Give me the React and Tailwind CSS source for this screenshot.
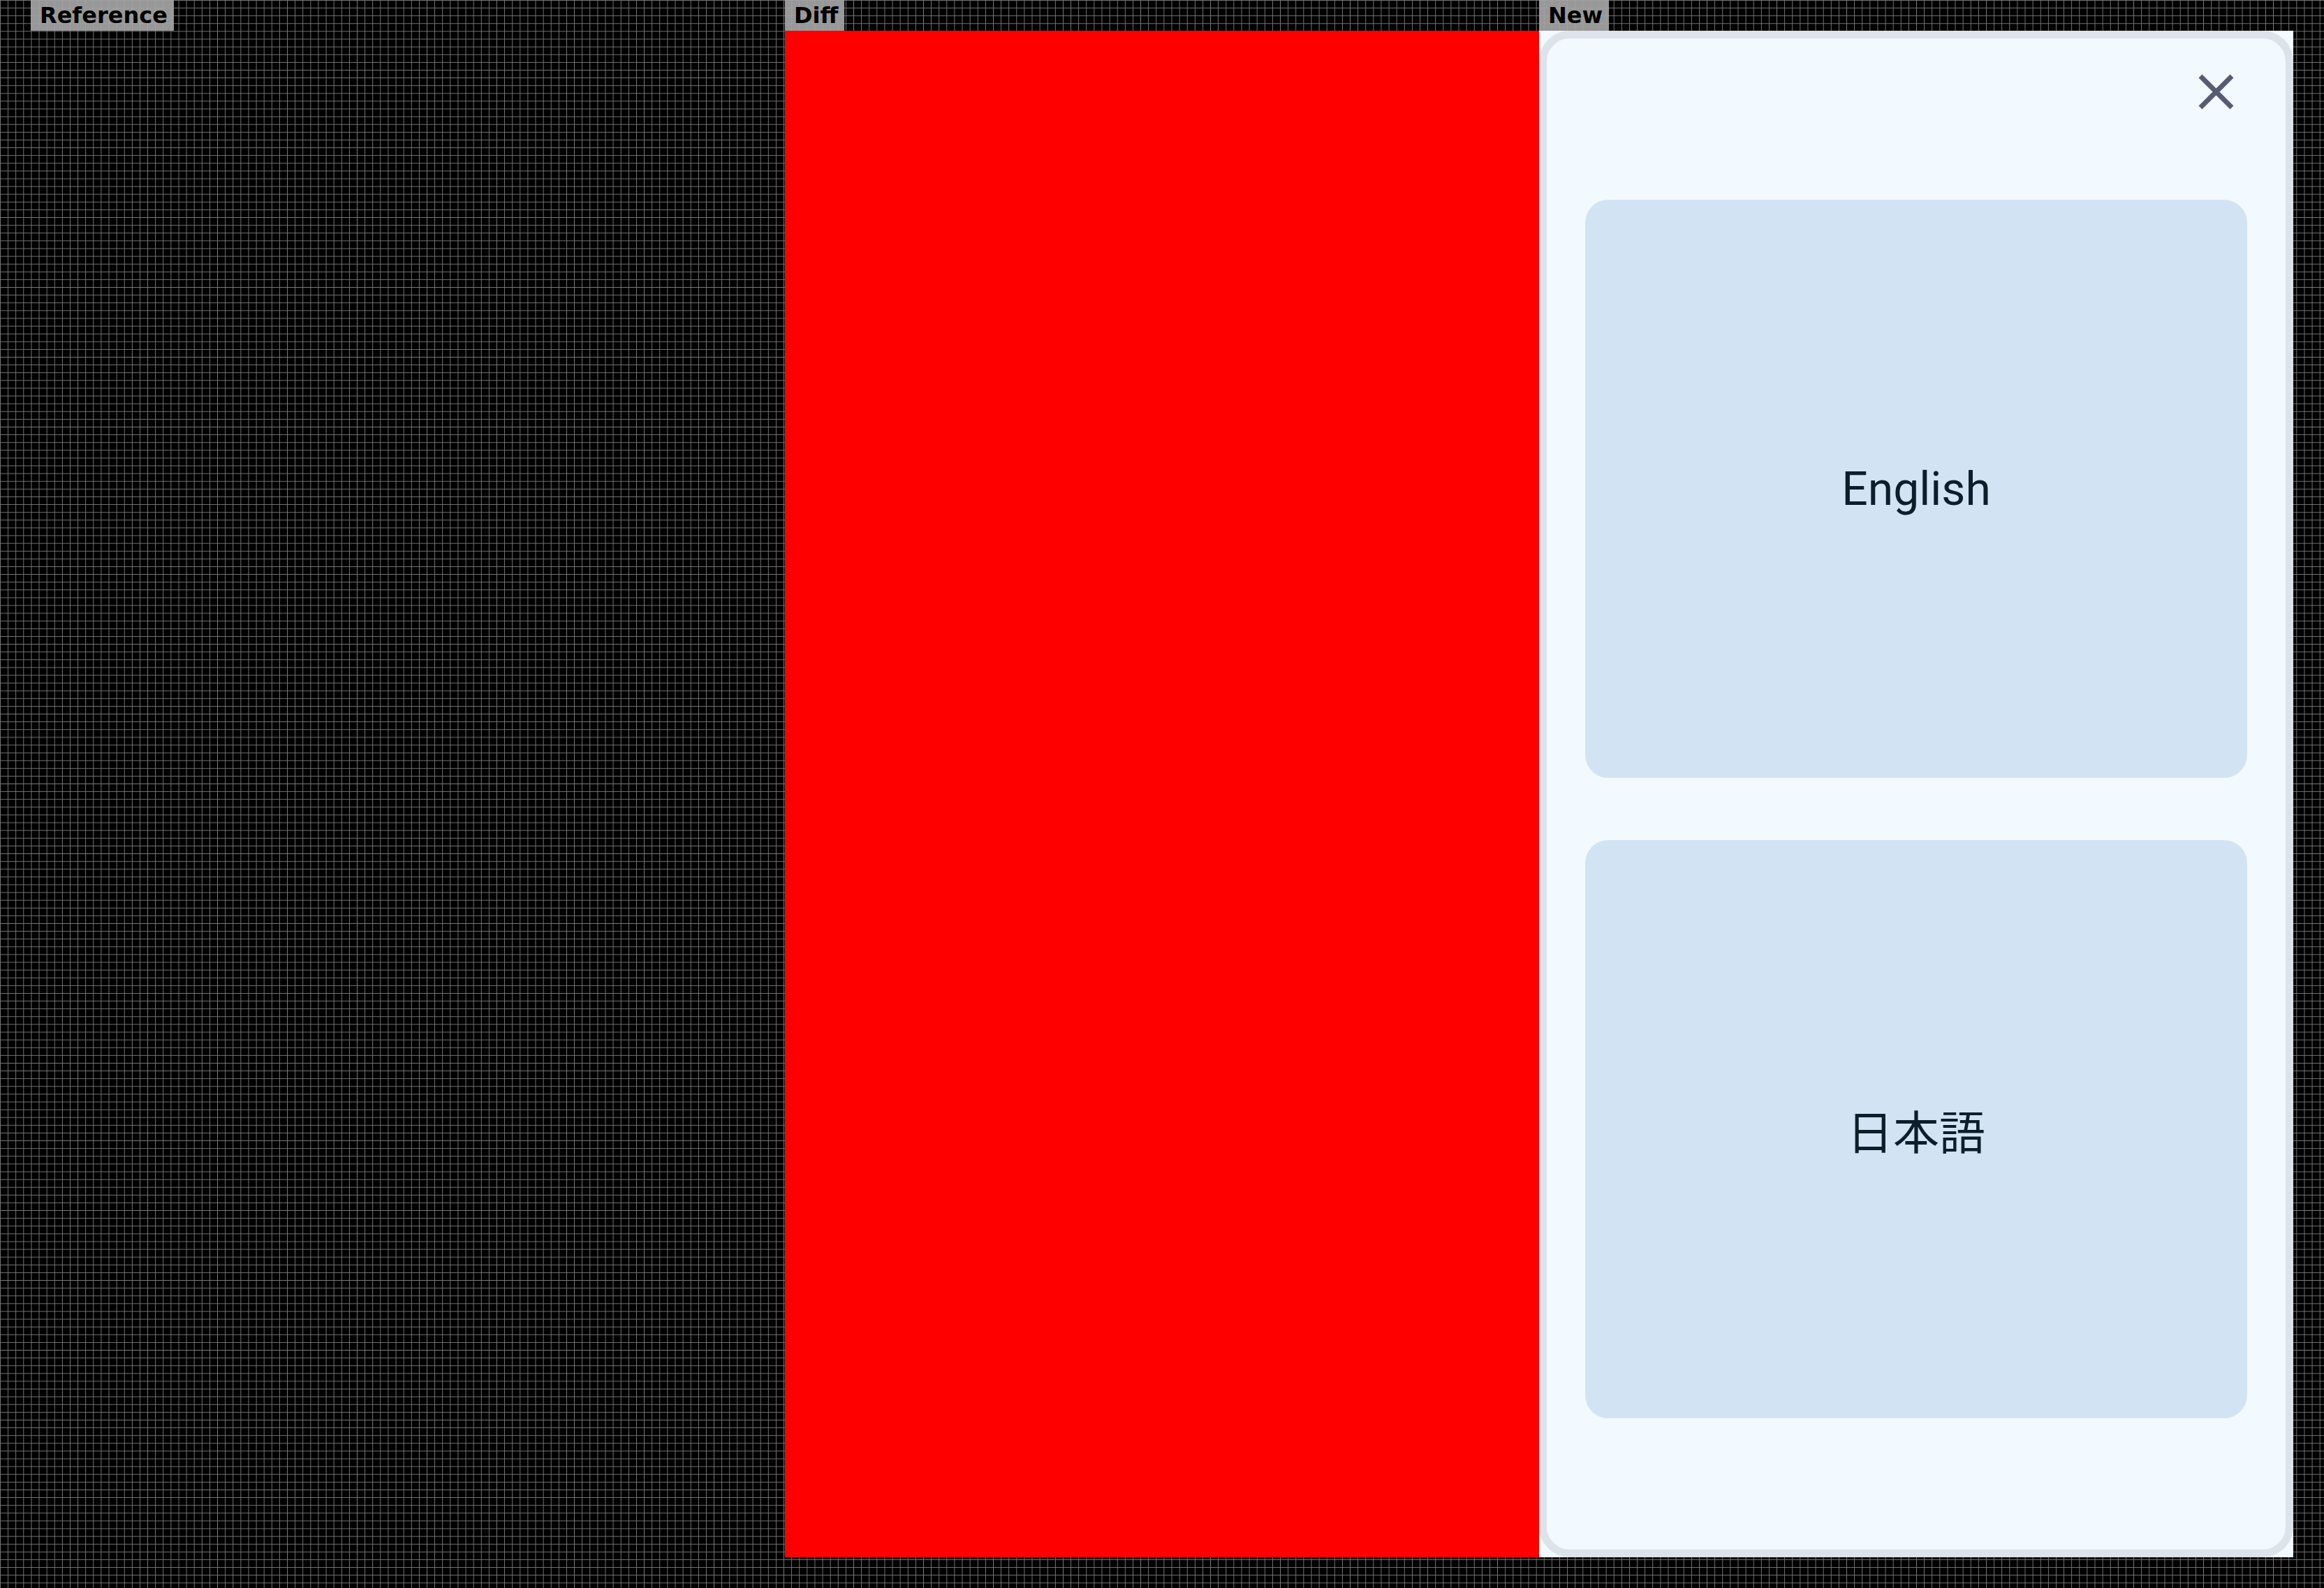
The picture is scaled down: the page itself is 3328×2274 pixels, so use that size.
import React from 'react';

const gridBg =
  'bg-black bg-[linear-gradient(to_right,#7a7a7a_1px,transparent_1px),linear-gradient(to_bottom,#7a7a7a_1px,transparent_1px)] bg-[size:11.11px_11.11px]';

const PanelLabel = ({ children }) => (
  <div className="h-[44px] flex">
    <span className="h-[44px] pl-[13px] pr-[9px] bg-[rgba(165,165,165,0.92)] text-black text-[32px] leading-[44px] font-bold font-['DejaVu_Sans',sans-serif]">
      {children}
    </span>
  </div>
);

const LanguageModal = () => {
  const languages = [
    { code: 'en', label: 'English', font: "font-['Roboto',sans-serif]" },
    { code: 'ja', label: '日本語', font: "font-['Noto_Sans_CJK_JP',sans-serif]" },
  ];

  return (
    <div className="w-[1080px] h-[2186px] bg-[#f2f9ff]">
      <div className="h-full flex flex-col rounded-[44px] border-[11px] border-[#dce3ea] bg-[#f2f9ff]">
        {/* Header */}
        <div className="flex justify-end pt-[51px] pr-[74px]">
          <button className="w-[51px] h-[51px]">
            <svg width="51" height="51" viewBox="0 0 51 51" fill="none">
              <path d="M3 3L48 48M48 3L3 48" stroke="#565b73" strokeWidth="7" strokeLinecap="butt" />
            </svg>
          </button>
        </div>

        {/* Options */}
        <div className="flex flex-col gap-[89px] px-[55px] mt-[129px]">
          {languages.map((lang) => (
            <button
              key={lang.code}
              lang={lang.code}
              className={`h-[828px] rounded-[33px] bg-[#d2e4f3] flex items-center justify-center text-[66px] text-[#0b1e2a] ${lang.font}`}
            >
              {lang.label}
            </button>
          ))}
        </div>
      </div>
    </div>
  );
};

export default function App() {
  return (
    <div className={`w-[3328px] h-[2274px] ${gridBg} flex pl-[44px]`}>
      {/* Reference */}
      <div className="w-[1080px] flex flex-col">
        <PanelLabel>Reference</PanelLabel>
        <div className="h-[2186px]" />
      </div>

      {/* Diff */}
      <div className="w-[1080px] flex flex-col">
        <PanelLabel>Diff</PanelLabel>
        <div className="h-[2186px] bg-[#ff0000]" />
      </div>

      {/* New */}
      <div className="w-[1080px] flex flex-col">
        <PanelLabel>New</PanelLabel>
        <LanguageModal />
      </div>
    </div>
  );
}
